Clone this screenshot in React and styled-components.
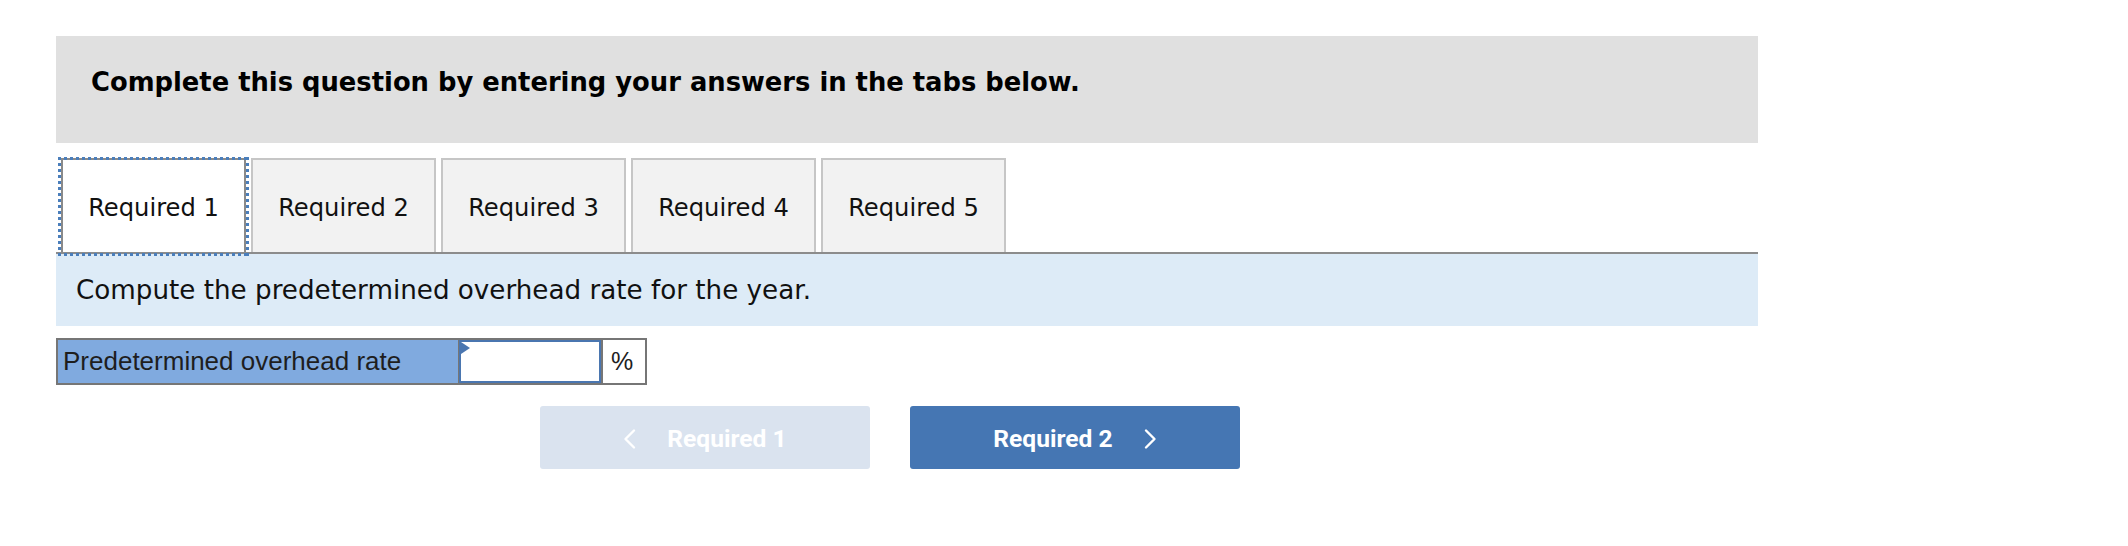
import React from 'react';
import styled, { createGlobalStyle } from 'styled-components';

const GlobalStyle = createGlobalStyle`
    html, body {
        margin: 0;
        padding: 0;
        background: #fff;
    }
`;

const Page = styled.div`
    width: 1702px;
    padding: 36px 0 0 56px;
`;

const Banner = styled.div`
    height: 107px;
    box-sizing: border-box;
    padding: 31px 0 0 35px;
    background: #e0e0e0;
    font-family: 'DejaVu Sans', Verdana, sans-serif;
    font-weight: bold;
    font-size: 25.8px;
    color: #000;
`;

const TabBar = styled.div`
    display: flex;
    gap: 5px;
    padding: 15px 0 0 5px;
    border-bottom: 2px solid #8c8c8c;
`;

const Tab = styled.div`
    position: relative;
    box-sizing: border-box;
    width: 185px;
    height: 94px;
    display: flex;
    align-items: center;
    justify-content: center;
    padding-top: 3px;
    border: 2px solid ${props => (props.active ? '#8a8a8a' : '#c6c6c6')};
    border-bottom: none;
    background: ${props => (props.active ? '#fff' : '#f2f2f2')};
    font-family: 'DejaVu Sans', Verdana, sans-serif;
    font-size: 24.2px;
    color: #111;

    &::after {
        content: '';
        display: ${props => (props.active ? 'block' : 'none')};
        position: absolute;
        top: -3px;
        left: -5px;
        right: -5px;
        bottom: -4px;
        background:
            repeating-linear-gradient(90deg, #4a7ebb 0 3px, transparent 3px 6px) top / 100% 3px no-repeat,
            repeating-linear-gradient(90deg, #4a7ebb 0 3px, transparent 3px 6px) bottom / 100% 3px no-repeat,
            repeating-linear-gradient(180deg, #4a7ebb 0 3px, transparent 3px 6px) left / 3px 100% no-repeat,
            repeating-linear-gradient(180deg, #4a7ebb 0 3px, transparent 3px 6px) right / 3px 100% no-repeat;
    }
`;

const Prompt = styled.div`
    height: 72px;
    display: flex;
    align-items: center;
    padding-left: 20px;
    background: #ddebf7;
    font-family: 'DejaVu Sans', Verdana, sans-serif;
    font-size: 26.2px;
    color: #111;
`;

const AnswerRow = styled.div`
    display: flex;
    margin-top: 12px;
    height: 47px;
`;

const LabelCell = styled.div`
    box-sizing: border-box;
    width: 403px;
    display: flex;
    align-items: center;
    padding-left: 5px;
    border: 2px solid #767676;
    border-right-width: 1px;
    background: #80aadf;
    font-family: 'Liberation Sans', Arial, sans-serif;
    font-size: 26px;
    color: #1e1e1e;
`;

const InputCell = styled.div`
    position: relative;
    box-sizing: border-box;
    width: 142px;
    border-top: 2px solid #767676;
    border-bottom: 2px solid #767676;
    background: #fff;
`;

const RateInput = styled.input`
    box-sizing: border-box;
    width: 100%;
    height: 100%;
    margin: 0;
    border: 2px solid #4a76b0;
    outline: none;
    background: #fff;
`;

const Marker = styled.span`
    position: absolute;
    top: 2px;
    left: 2px;
    width: 0;
    height: 0;
    border-top: 6px solid transparent;
    border-bottom: 6px solid transparent;
    border-left: 9px solid #4a76b0;
`;

const UnitCell = styled.div`
    box-sizing: border-box;
    width: 46px;
    display: flex;
    align-items: center;
    padding-left: 8px;
    border: 2px solid #767676;
    background: #fff;
    font-family: 'Liberation Sans', Arial, sans-serif;
    font-size: 25px;
    color: #1e1e1e;
`;

const NavRow = styled.div`
    display: flex;
    gap: 40px;
    margin: 21px 0 0 484px;
`;

const NavButton = styled.button`
    box-sizing: border-box;
    width: 330px;
    height: 63px;
    display: flex;
    align-items: center;
    justify-content: center;
    gap: 31px;
    border: none;
    border-radius: 3px;
    background: ${props => (props.disabled ? '#dae3ef' : '#4576b3')};
    color: #fff;
    font-family: Roboto, 'Liberation Sans', sans-serif;
    font-weight: bold;
    font-size: 24.6px;
    padding: 2px 0 0;
`;

const Chevron = ({ dir }) => (
    <svg width="13" height="22" viewBox="0 0 13 22" fill="none">
        <path
            d={dir === 'left' ? 'M11 2.5 L2.5 11 L11 19.5' : 'M2 2.5 L10.5 11 L2 19.5'}
            stroke="#fff"
            strokeWidth="2.4"
            strokeLinecap="round"
            strokeLinejoin="round"
        />
    </svg>
);

const tabs = ['Required 1', 'Required 2', 'Required 3', 'Required 4', 'Required 5'];

export default function App() {
    return (
        <Page>
            <GlobalStyle />
            <Banner>Complete this question by entering your answers in the tabs below.</Banner>
            <TabBar>
                {tabs.map((t, i) => (
                    <Tab key={t} active={i === 0}>
                        {t}
                    </Tab>
                ))}
            </TabBar>
            <Prompt>Compute the predetermined overhead rate for the year.</Prompt>
            <AnswerRow>
                <LabelCell>Predetermined overhead rate</LabelCell>
                <InputCell>
                    <RateInput type="text" />
                    <Marker />
                </InputCell>
                <UnitCell>%</UnitCell>
            </AnswerRow>
            <NavRow>
                <NavButton disabled>
                    <Chevron dir="left" />
                    Required 1
                </NavButton>
                <NavButton>
                    Required 2
                    <Chevron dir="right" />
                </NavButton>
            </NavRow>
        </Page>
    );
}
